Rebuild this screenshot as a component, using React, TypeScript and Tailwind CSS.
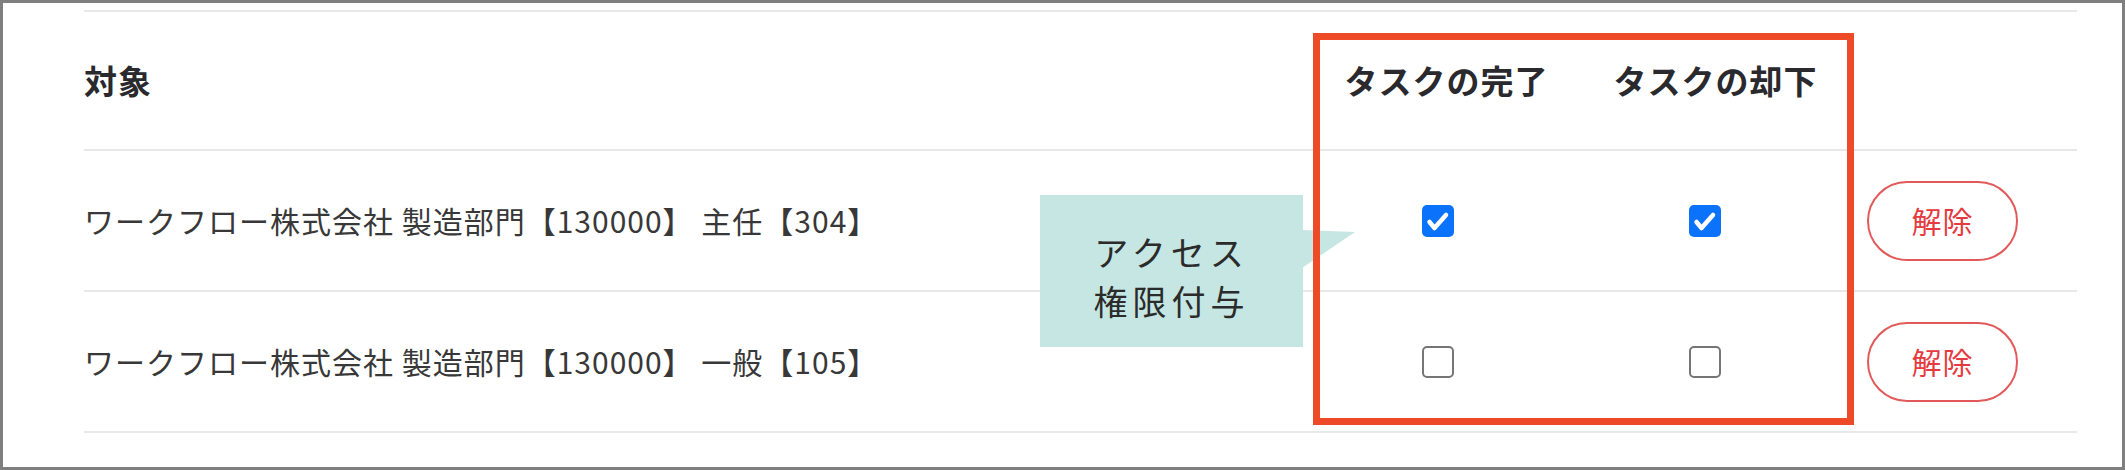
import React from "react";

type Row = { name: string; done: boolean; reject: boolean };

const rows: Row[] = [
  { name: "ワークフロー株式会社 製造部門【130000】 主任【304】", done: true, reject: true },
  { name: "ワークフロー株式会社 製造部門【130000】 一般【105】", done: false, reject: false },
];

function Check({ checked }: { checked: boolean }) {
  if (!checked) {
    return <div className="w-[32px] h-[32px] rounded-[5px] border-2 border-[#767676] bg-white" />;
  }
  return (
    <div className="w-[32px] h-[32px] rounded-[5px] bg-[#0b72fb] flex items-center justify-center">
      <svg width="32" height="32" viewBox="0 0 32 32">
        <polyline
          points="7.5,17 12.5,23 24,10"
          fill="none"
          stroke="#fff"
          strokeWidth="4.5"
          strokeLinecap="round"
          strokeLinejoin="round"
        />
      </svg>
    </div>
  );
}

export default function App() {
  return (
    <div
      className="relative w-[2125px] h-[470px] border-[3px] border-[#7f7f7f] bg-white pl-[81px] pr-[45px] pt-[7px]"
      style={{ fontFamily: '"Noto Sans CJK JP", "Noto Sans", sans-serif' }}
    >
      {/* Table */}
      <div className="border-t-2 border-[#e8e8e8]">
        <div className="grid grid-cols-[1220px_267px_267px_1fr] h-[139px] border-b-2 border-[#e8e8e8] items-center">
          <div className="text-[33px] font-bold text-[#2a2a2e] tracking-[1px]">対象</div>
          <div className="text-center text-[33px] font-bold text-[#2a2a2e] tracking-[1px] pl-[18px]">タスクの完了</div>
          <div className="text-center text-[33px] font-bold text-[#2a2a2e] tracking-[1px] pl-[22px]">タスクの却下</div>
          <div />
        </div>
        {rows.map((r, i) => (
          <div
            key={i}
            className="grid grid-cols-[1220px_267px_267px_1fr] h-[141px] border-b-2 border-[#e8e8e8] items-center"
          >
            <div className="text-[30px] text-[#383838] tracking-[1px] whitespace-nowrap">{r.name}</div>
            <div className="flex justify-center">
              <Check checked={r.done} />
            </div>
            <div className="flex justify-center">
              <Check checked={r.reject} />
            </div>
            <div className="pl-[29px]">
              <button className="w-[151px] h-[80px] rounded-full border-2 border-[#e2595a] text-[#e53a3f] text-[30px] tracking-[1px] bg-white">
                解除
              </button>
            </div>
          </div>
        ))}
      </div>

      {/* Callout */}
      <div className="absolute left-[1037px] top-[192px] w-[263px] h-[152px] bg-[#c5e6e3] flex flex-col items-center justify-center pt-[10px] text-[34px] leading-[49px] tracking-[5px] text-[#2b2b2b]">
        <div>アクセス</div>
        <div>権限付与</div>
        <svg className="absolute left-[262px] top-[35px]" width="54" height="40" viewBox="0 0 54 40">
          <polygon points="0,0 53,2 0,38" fill="#c5e6e3" />
        </svg>
      </div>

      {/* Highlight frame */}
      <div className="absolute left-[1310px] top-[30px] w-[541px] h-[392px] border-[7px] border-[#ee4a27] pointer-events-none" />
    </div>
  );
}
